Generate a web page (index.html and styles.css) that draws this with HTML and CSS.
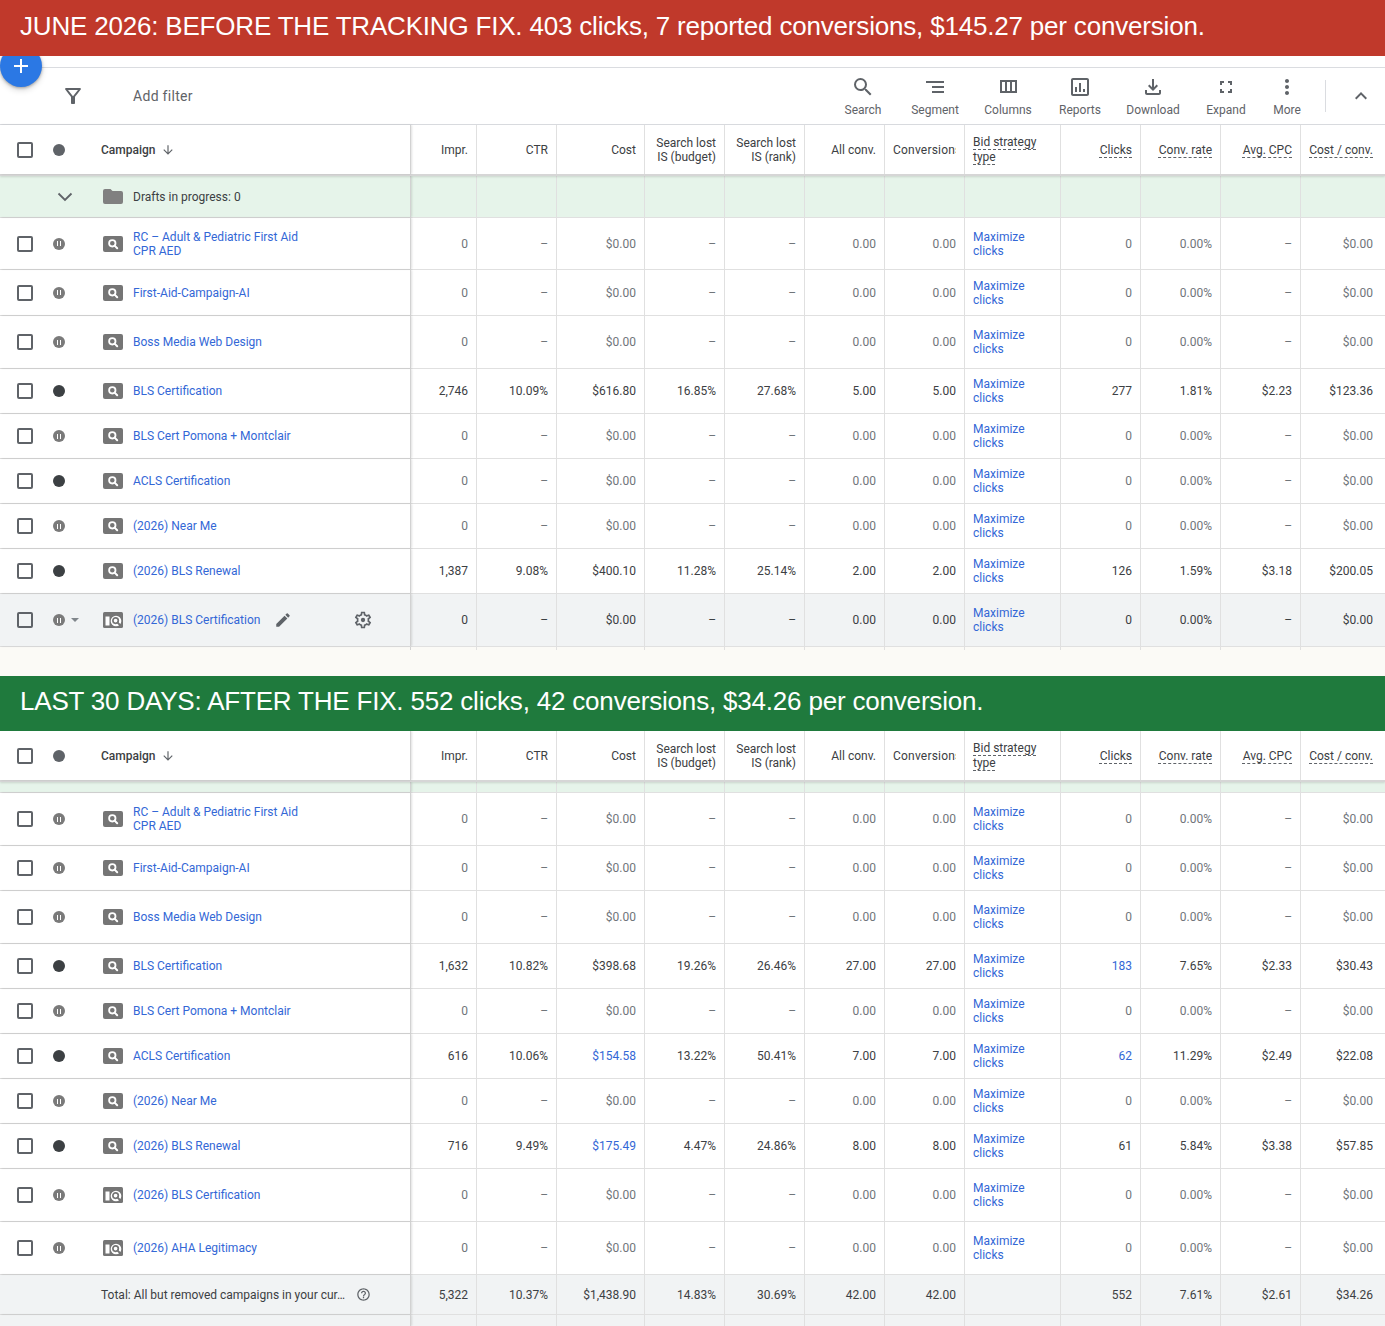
FILE: index.html
```html
<!DOCTYPE html>
<html lang="en">
<head>
<meta charset="utf-8">
<title>Campaigns – before and after the tracking fix</title>
<link rel="stylesheet" href="styles.css">
</head>
<body>
<svg class="sprite" width="0" height="0" aria-hidden="true">
  <symbol id="t1" viewBox="0 0 20 16">
    <rect width="20" height="16" rx="2" fill="#757575"/>
    <circle cx="9.3" cy="7.3" r="3.2" fill="none" stroke="#fff" stroke-width="1.8"/>
    <line x1="11.6" y1="9.6" x2="14.2" y2="12.2" stroke="#fff" stroke-width="2" stroke-linecap="round"/>
  </symbol>
  <symbol id="t2" viewBox="0 0 20 16">
    <rect width="20" height="16" rx="1.5" fill="#757575"/>
    <rect x="2.5" y="4.5" width="4" height="9" fill="#fff"/>
    <circle cx="13" cy="9" r="5.3" fill="#fff"/>
    <circle cx="12.6" cy="8.6" r="2.7" fill="none" stroke="#757575" stroke-width="1.7"/>
    <line x1="14.6" y1="10.6" x2="17" y2="13" stroke="#757575" stroke-width="1.9" stroke-linecap="round"/>
  </symbol>
</svg>

<div class="banner red">JUNE 2026: BEFORE THE TRACKING FIX. 403 clicks, 7 reported conversions, $145.27 per conversion.</div>

<div class="toolwrap">
  <div class="fab"><svg viewBox="0 0 24 24" width="24" height="24"><path d="M19 13h-6v6h-2v-6H5v-2h6V5h2v6h6v2z" fill="#fff"/></svg></div>
  <div class="toolbar">
    <svg class="filter" viewBox="0 0 24 24"><path d="M7 6h10l-5.01 6.3L7 6zm-2.75-.39C6.27 8.2 10 13 10 13v6c0 .55.45 1 1 1h2c.55 0 1-.45 1-1v-6s3.72-4.8 5.74-7.39A.998.998 0 0 0 18.95 4H5.04c-.83 0-1.3.95-.79 1.61z"/></svg>
    <div class="addf">Add filter</div>
    <div class="spacer"></div>
    <div class="tool w72"><svg viewBox="0 0 24 24"><path d="M15.5 14h-.79l-.28-.27A6.471 6.471 0 0 0 16 9.5 6.5 6.5 0 1 0 9.5 16c1.61 0 3.09-.59 4.23-1.570l.27.28v.79l5 4.99L20.49 19l-4.990-5zm-6 0C7.01 14 5 11.99 5 9.5S7.01 5 9.5 5 14 7.01 14 9.5 11.99 14 9.5 14z"/></svg><span>Search</span></div>
    <div class="tool w72"><svg viewBox="0 0 24 24"><path d="M9 18h12v-2H9v2zM3 6v2h18V6H3zm6 7h12v-2H9v2z"/></svg><span>Segment</span></div>
    <div class="tool w74"><svg viewBox="0 0 24 24"><path d="M4 5v13h17V5H4zm10 2v9h-3V7h3zM6 7h3v9H6V7zm13 9h-3V7h3v9z"/></svg><span>Columns</span></div>
    <div class="tool w70"><svg viewBox="0 0 24 24"><path d="M9 17H7v-5h2v5zm4 0h-2V8h2v9zm4 0h-2v-3h2v3zm2 2H5V5h14v14zm0-16H5c-1.1 0-2 .9-2 2v14c0 1.1.9 2 2 2h14c1.1 0 2-.9 2-2V5c0-1.1-.9-2-2-2z"/></svg><span>Reports</span></div>
    <div class="tool w76"><svg viewBox="0 0 24 24"><path d="M18 15v3H6v-3H4v3c0 1.1.9 2 2 2h12c1.1 0 2-.9 2-2v-3h-2zm-1-4l-1.41-1.41L13 12.17V4h-2v8.17L8.41 9.59 7 11l5 5 5-5z"/></svg><span>Download</span></div>
    <div class="tool w70"><svg viewBox="0 0 24 24"><path d="M8 14H6v4h4v-2H8v-2zm-2-4h2V8h2V6H6v4zm10 6h-2v2h4v-4h-2v2zM14 6v2h2v2h2V6h-4z"/></svg><span>Expand</span></div>
    <div class="tool w52"><svg viewBox="0 0 24 24"><path d="M12 8c1.1 0 2-.9 2-2s-.9-2-2-2-2 .9-2 2 .9 2 2 2zm0 2c-1.1 0-2 .9-2 2s.9 2 2 2 2-.9 2-2-.9-2-2-2zm0 6c-1.1 0-2 .9-2 2s.9 2 2 2 2-.9 2-2-.9-2-2-2z"/></svg><span>More</span></div>
    <div class="vdiv"></div>
    <div class="collapse"><svg viewBox="0 0 24 24"><path d="M12 8l-6 6 1.41 1.41L12 10.83l4.59 4.58L18 14z"/></svg></div>
  </div>
</div>

<div class="table">
  <div class="row head h51">
    <div class="c camp"><span class="cb"><i class="box"></i></span><span class="st"><i class="dot hd"></i></span><span class="ch">Campaign</span><svg class="sort" viewBox="0 0 24 24"><path d="M20 12l-1.41-1.41L13 16.17V4h-2v12.17l-5.58-5.590L4 12l8 8 8-8z"/></svg></div>
    <div class="c">Impr.</div>
    <div class="c">CTR</div>
    <div class="c">Cost</div>
    <div class="c">Search lost<br>IS (budget)</div>
    <div class="c">Search lost<br>IS (rank)</div>
    <div class="c">All conv.</div>
    <div class="c clip"><span>Conversions</span></div>
    <div class="c bidh dash"><span>Bid strategy</span><span>type</span></div>
    <div class="c dash"><span>Clicks</span></div>
    <div class="c dash"><span>Conv. rate</span></div>
    <div class="c dash"><span>Avg. CPC</span></div>
    <div class="c dash"><span>Cost / conv.</span></div>
  </div>

  <div class="row drafts h42">
    <div class="c camp"><span class="cb"></span><span class="st"><svg class="chev" viewBox="0 0 16 10"><polyline points="1.5,1.5 8,8 14.5,1.5" fill="none" stroke="#5f6368" stroke-width="1.8"/></svg></span><svg class="folder" viewBox="0 0 20 15"><path d="M0 2a2 2 0 0 1 2-2h5.5l2 2H18a2 2 0 0 1 2 2v9a2 2 0 0 1-2 2H2a2 2 0 0 1-2-2z" fill="#808080"/></svg><span class="dtext">Drafts in progress: 0</span></div>
    <div class="c"></div><div class="c"></div><div class="c"></div><div class="c"></div><div class="c"></div><div class="c"></div><div class="c"></div><div class="c"></div><div class="c"></div><div class="c"></div><div class="c"></div><div class="c"></div>
  </div>

  <div class="row z h52">
    <div class="c camp"><span class="cb"><i class="box"></i></span><span class="st"><i class="dot p"></i></span><svg class="ti"><use href="#t1"/></svg><span class="nm lnk">RC – Adult &amp; Pediatric First Aid CPR AED</span></div>
    <div class="c">0</div><div class="c">–</div><div class="c">$0.00</div><div class="c">–</div><div class="c">–</div><div class="c">0.00</div><div class="c">0.00</div><div class="c bid"><span class="lnk">Maximize clicks</span></div><div class="c">0</div><div class="c">0.00%</div><div class="c">–</div><div class="c">$0.00</div>
  </div>

  <div class="row z h46">
    <div class="c camp"><span class="cb"><i class="box"></i></span><span class="st"><i class="dot p"></i></span><svg class="ti"><use href="#t1"/></svg><span class="nm lnk">First-Aid-Campaign-AI</span></div>
    <div class="c">0</div><div class="c">–</div><div class="c">$0.00</div><div class="c">–</div><div class="c">–</div><div class="c">0.00</div><div class="c">0.00</div><div class="c bid"><span class="lnk">Maximize clicks</span></div><div class="c">0</div><div class="c">0.00%</div><div class="c">–</div><div class="c">$0.00</div>
  </div>

  <div class="row z h53">
    <div class="c camp"><span class="cb"><i class="box"></i></span><span class="st"><i class="dot p"></i></span><svg class="ti"><use href="#t1"/></svg><span class="nm lnk">Boss Media Web Design</span></div>
    <div class="c">0</div><div class="c">–</div><div class="c">$0.00</div><div class="c">–</div><div class="c">–</div><div class="c">0.00</div><div class="c">0.00</div><div class="c bid"><span class="lnk">Maximize clicks</span></div><div class="c">0</div><div class="c">0.00%</div><div class="c">–</div><div class="c">$0.00</div>
  </div>

  <div class="row h45">
    <div class="c camp"><span class="cb"><i class="box"></i></span><span class="st"><i class="dot"></i></span><svg class="ti"><use href="#t1"/></svg><span class="nm lnk">BLS Certification</span></div>
    <div class="c">2,746</div><div class="c">10.09%</div><div class="c">$616.80</div><div class="c">16.85%</div><div class="c">27.68%</div><div class="c">5.00</div><div class="c">5.00</div><div class="c bid"><span class="lnk">Maximize clicks</span></div><div class="c">277</div><div class="c">1.81%</div><div class="c">$2.23</div><div class="c">$123.36</div>
  </div>

  <div class="row z h45">
    <div class="c camp"><span class="cb"><i class="box"></i></span><span class="st"><i class="dot p"></i></span><svg class="ti"><use href="#t1"/></svg><span class="nm lnk">BLS Cert Pomona + Montclair</span></div>
    <div class="c">0</div><div class="c">–</div><div class="c">$0.00</div><div class="c">–</div><div class="c">–</div><div class="c">0.00</div><div class="c">0.00</div><div class="c bid"><span class="lnk">Maximize clicks</span></div><div class="c">0</div><div class="c">0.00%</div><div class="c">–</div><div class="c">$0.00</div>
  </div>

  <div class="row z h45">
    <div class="c camp"><span class="cb"><i class="box"></i></span><span class="st"><i class="dot"></i></span><svg class="ti"><use href="#t1"/></svg><span class="nm lnk">ACLS Certification</span></div>
    <div class="c">0</div><div class="c">–</div><div class="c">$0.00</div><div class="c">–</div><div class="c">–</div><div class="c">0.00</div><div class="c">0.00</div><div class="c bid"><span class="lnk">Maximize clicks</span></div><div class="c">0</div><div class="c">0.00%</div><div class="c">–</div><div class="c">$0.00</div>
  </div>

  <div class="row z h45">
    <div class="c camp"><span class="cb"><i class="box"></i></span><span class="st"><i class="dot p"></i></span><svg class="ti"><use href="#t1"/></svg><span class="nm lnk">(2026) Near Me</span></div>
    <div class="c">0</div><div class="c">–</div><div class="c">$0.00</div><div class="c">–</div><div class="c">–</div><div class="c">0.00</div><div class="c">0.00</div><div class="c bid"><span class="lnk">Maximize clicks</span></div><div class="c">0</div><div class="c">0.00%</div><div class="c">–</div><div class="c">$0.00</div>
  </div>

  <div class="row h45">
    <div class="c camp"><span class="cb"><i class="box"></i></span><span class="st"><i class="dot"></i></span><svg class="ti"><use href="#t1"/></svg><span class="nm lnk">(2026) BLS Renewal</span></div>
    <div class="c">1,387</div><div class="c">9.08%</div><div class="c">$400.10</div><div class="c">11.28%</div><div class="c">25.14%</div><div class="c">2.00</div><div class="c">2.00</div><div class="c bid"><span class="lnk">Maximize clicks</span></div><div class="c">126</div><div class="c">1.59%</div><div class="c">$3.18</div><div class="c">$200.05</div>
  </div>

  <div class="row hover h53">
    <div class="c camp"><span class="cb"><i class="box"></i></span><span class="st"><i class="dot p"></i><i class="caret"></i></span><svg class="ti"><use href="#t2"/></svg><span class="nm lnk">(2026) BLS Certification</span><svg class="pen" viewBox="0 0 24 24"><path d="M3 17.25V21h3.75L17.81 9.94l-3.75-3.75L3 17.25zM20.71 7.04a1 1 0 0 0 0-1.41l-2.34-2.34a1 1 0 0 0-1.41 0l-1.83 1.83 3.75 3.75 1.83-1.83z"/></svg><svg class="gear" viewBox="0 0 24 24"><path d="M19.43 12.98c.04-.32.07-.64.07-.98 0-.34-.03-.66-.07-.98l2.11-1.65c.19-.15.24-.42.12-.64l-2-3.46a.5.5 0 0 0-.61-.22l-2.49 1c-.52-.4-1.08-.73-1.69-.98l-.38-2.65A.488.488 0 0 0 14 2h-4c-.25 0-.46.18-.49.42l-.38 2.650c-.61.25-1.17.59-1.69.98l-2.49-1a.566.566 0 0 0-.18-.03c-.17 0-.34.09-.43.25l-2 3.46c-.13.22-.07.49.12.64l2.11 1.65c-.04.32-.07.65-.07.98s.03.66.07.98l-2.11 1.65c-.19.15-.24.42-.12.64l2 3.46a.5.5 0 0 0 .61.22l2.49-1c.52.4 1.08.73 1.69.98l.38 2.65c.03.24.24.42.49.42h4c.25 0 .46-.18.49-.42l.38-2.65c.61-.25 1.17-.59 1.69-.98l2.49 1c.06.02.12.03.18.03.17 0 .34-.09.43-.25l2-3.46c.12-.22.07-.49-.12-.64l-2.11-1.65zm-1.98-1.71c.04.31.05.52.05.73 0 .21-.02.43-.05.73l-.14 1.13.89.7 1.08.84-.7 1.21-1.27-.51-1.04-.42-.9.68c-.43.32-.84.56-1.25.73l-1.06.43-.16 1.13-.2 1.35h-1.4l-.19-1.35-.16-1.13-1.06-.43c-.43-.18-.83-.41-1.23-.71l-.91-.7-1.06.43-1.27.51-.7-1.21 1.08-.84.89-.7-.14-1.13c-.03-.31-.05-.54-.05-.74s.02-.43.05-.73l.14-1.13-.89-.7-1.08-.84.7-1.21 1.27.51 1.04.42.9-.68c.43-.32.84-.56 1.25-.73l1.06-.43.16-1.13.2-1.35h1.39l.19 1.35.16 1.13 1.06.43c.43.18.83.41 1.23.71l.91.7 1.06-.43 1.27-.51.7 1.21-1.07.85-.89.7.14 1.13z"/><circle cx="12" cy="12" r="2.6"/></svg></div>
    <div class="c">0</div><div class="c">–</div><div class="c">$0.00</div><div class="c">–</div><div class="c">–</div><div class="c">0.00</div><div class="c">0.00</div><div class="c bid"><span class="lnk">Maximize clicks</span></div><div class="c">0</div><div class="c">0.00%</div><div class="c">–</div><div class="c">$0.00</div>
  </div>
</div>

<div class="gap">
  <div class="row tail">
    <div class="c camp"></div><div class="c"></div><div class="c"></div><div class="c"></div><div class="c"></div><div class="c"></div><div class="c"></div><div class="c"></div><div class="c"></div><div class="c"></div><div class="c"></div><div class="c"></div><div class="c"></div>
  </div>
</div>

<div class="banner green">LAST 30 DAYS: AFTER THE FIX. 552 clicks, 42 conversions, $34.26 per conversion.</div>

<div class="table">
  <div class="row head h51">
    <div class="c camp"><span class="cb"><i class="box"></i></span><span class="st"><i class="dot hd"></i></span><span class="ch">Campaign</span><svg class="sort" viewBox="0 0 24 24"><path d="M20 12l-1.41-1.41L13 16.17V4h-2v12.17l-5.58-5.59L4 12l8 8 8-8z"/></svg></div>
    <div class="c">Impr.</div>
    <div class="c">CTR</div>
    <div class="c">Cost</div>
    <div class="c">Search lost<br>IS (budget)</div>
    <div class="c">Search lost<br>IS (rank)</div>
    <div class="c">All conv.</div>
    <div class="c clip"><span>Conversions</span></div>
    <div class="c bidh dash"><span>Bid strategy</span><span>type</span></div>
    <div class="c dash"><span>Clicks</span></div>
    <div class="c dash"><span>Conv. rate</span></div>
    <div class="c dash"><span>Avg. CPC</span></div>
    <div class="c dash"><span>Cost / conv.</span></div>
  </div>

  <div class="row drafts h11">
    <div class="c camp"></div><div class="c"></div><div class="c"></div><div class="c"></div><div class="c"></div><div class="c"></div><div class="c"></div><div class="c"></div><div class="c"></div><div class="c"></div><div class="c"></div><div class="c"></div><div class="c"></div>
  </div>

  <div class="row z h53">
    <div class="c camp"><span class="cb"><i class="box"></i></span><span class="st"><i class="dot p"></i></span><svg class="ti"><use href="#t1"/></svg><span class="nm lnk">RC – Adult &amp; Pediatric First Aid CPR AED</span></div>
    <div class="c">0</div><div class="c">–</div><div class="c">$0.00</div><div class="c">–</div><div class="c">–</div><div class="c">0.00</div><div class="c">0.00</div><div class="c bid"><span class="lnk">Maximize clicks</span></div><div class="c">0</div><div class="c">0.00%</div><div class="c">–</div><div class="c">$0.00</div>
  </div>

  <div class="row z h45">
    <div class="c camp"><span class="cb"><i class="box"></i></span><span class="st"><i class="dot p"></i></span><svg class="ti"><use href="#t1"/></svg><span class="nm lnk">First-Aid-Campaign-AI</span></div>
    <div class="c">0</div><div class="c">–</div><div class="c">$0.00</div><div class="c">–</div><div class="c">–</div><div class="c">0.00</div><div class="c">0.00</div><div class="c bid"><span class="lnk">Maximize clicks</span></div><div class="c">0</div><div class="c">0.00%</div><div class="c">–</div><div class="c">$0.00</div>
  </div>

  <div class="row z h53">
    <div class="c camp"><span class="cb"><i class="box"></i></span><span class="st"><i class="dot p"></i></span><svg class="ti"><use href="#t1"/></svg><span class="nm lnk">Boss Media Web Design</span></div>
    <div class="c">0</div><div class="c">–</div><div class="c">$0.00</div><div class="c">–</div><div class="c">–</div><div class="c">0.00</div><div class="c">0.00</div><div class="c bid"><span class="lnk">Maximize clicks</span></div><div class="c">0</div><div class="c">0.00%</div><div class="c">–</div><div class="c">$0.00</div>
  </div>

  <div class="row h45">
    <div class="c camp"><span class="cb"><i class="box"></i></span><span class="st"><i class="dot"></i></span><svg class="ti"><use href="#t1"/></svg><span class="nm lnk">BLS Certification</span></div>
    <div class="c">1,632</div><div class="c">10.82%</div><div class="c">$398.68</div><div class="c">19.26%</div><div class="c">26.46%</div><div class="c">27.00</div><div class="c">27.00</div><div class="c bid"><span class="lnk">Maximize clicks</span></div><div class="c lnk">183</div><div class="c">7.65%</div><div class="c">$2.33</div><div class="c">$30.43</div>
  </div>

  <div class="row z h45">
    <div class="c camp"><span class="cb"><i class="box"></i></span><span class="st"><i class="dot p"></i></span><svg class="ti"><use href="#t1"/></svg><span class="nm lnk">BLS Cert Pomona + Montclair</span></div>
    <div class="c">0</div><div class="c">–</div><div class="c">$0.00</div><div class="c">–</div><div class="c">–</div><div class="c">0.00</div><div class="c">0.00</div><div class="c bid"><span class="lnk">Maximize clicks</span></div><div class="c">0</div><div class="c">0.00%</div><div class="c">–</div><div class="c">$0.00</div>
  </div>

  <div class="row h45">
    <div class="c camp"><span class="cb"><i class="box"></i></span><span class="st"><i class="dot"></i></span><svg class="ti"><use href="#t1"/></svg><span class="nm lnk">ACLS Certification</span></div>
    <div class="c">616</div><div class="c">10.06%</div><div class="c lnk">$154.58</div><div class="c">13.22%</div><div class="c">50.41%</div><div class="c">7.00</div><div class="c">7.00</div><div class="c bid"><span class="lnk">Maximize clicks</span></div><div class="c lnk">62</div><div class="c">11.29%</div><div class="c">$2.49</div><div class="c">$22.08</div>
  </div>

  <div class="row z h45">
    <div class="c camp"><span class="cb"><i class="box"></i></span><span class="st"><i class="dot p"></i></span><svg class="ti"><use href="#t1"/></svg><span class="nm lnk">(2026) Near Me</span></div>
    <div class="c">0</div><div class="c">–</div><div class="c">$0.00</div><div class="c">–</div><div class="c">–</div><div class="c">0.00</div><div class="c">0.00</div><div class="c bid"><span class="lnk">Maximize clicks</span></div><div class="c">0</div><div class="c">0.00%</div><div class="c">–</div><div class="c">$0.00</div>
  </div>

  <div class="row h45">
    <div class="c camp"><span class="cb"><i class="box"></i></span><span class="st"><i class="dot"></i></span><svg class="ti"><use href="#t1"/></svg><span class="nm lnk">(2026) BLS Renewal</span></div>
    <div class="c">716</div><div class="c">9.49%</div><div class="c lnk">$175.49</div><div class="c">4.47%</div><div class="c">24.86%</div><div class="c">8.00</div><div class="c">8.00</div><div class="c bid"><span class="lnk">Maximize clicks</span></div><div class="c">61</div><div class="c">5.84%</div><div class="c">$3.38</div><div class="c">$57.85</div>
  </div>

  <div class="row z h53">
    <div class="c camp"><span class="cb"><i class="box"></i></span><span class="st"><i class="dot p"></i></span><svg class="ti"><use href="#t2"/></svg><span class="nm lnk">(2026) BLS Certification</span></div>
    <div class="c">0</div><div class="c">–</div><div class="c">$0.00</div><div class="c">–</div><div class="c">–</div><div class="c">0.00</div><div class="c">0.00</div><div class="c bid"><span class="lnk">Maximize clicks</span></div><div class="c">0</div><div class="c">0.00%</div><div class="c">–</div><div class="c">$0.00</div>
  </div>

  <div class="row z h53">
    <div class="c camp"><span class="cb"><i class="box"></i></span><span class="st"><i class="dot p"></i></span><svg class="ti"><use href="#t2"/></svg><span class="nm lnk">(2026) AHA Legitimacy</span></div>
    <div class="c">0</div><div class="c">–</div><div class="c">$0.00</div><div class="c">–</div><div class="c">–</div><div class="c">0.00</div><div class="c">0.00</div><div class="c bid"><span class="lnk">Maximize clicks</span></div><div class="c">0</div><div class="c">0.00%</div><div class="c">–</div><div class="c">$0.00</div>
  </div>

  <div class="row total h40">
    <div class="c camp"><span class="cb"></span><span class="st"></span><span class="ttl">Total: All but removed campaigns in your cur…</span><svg class="help" viewBox="0 0 24 24"><path d="M11 18h2v-2h-2v2zm1-16C6.48 2 2 6.48 2 12s4.48 10 10 10 10-4.48 10-10S17.52 2 12 2zm0 18c-4.41 0-8-3.59-8-8s3.590-8 8-8 8 3.59 8 8-3.59 8-8 8zm0-14c-2.21 0-4 1.79-4 4h2c0-1.1.9-2 2-2s2 .9 2 2c0 2-3 1.75-3 5h2c0-2.25 3-2.5 3-5 0-2.21-1.79-4-4-4z"/></svg></div>
    <div class="c">5,322</div><div class="c">10.37%</div><div class="c">$1,438.90</div><div class="c">14.83%</div><div class="c">30.69%</div><div class="c">42.00</div><div class="c">42.00</div><div class="c"></div><div class="c">552</div><div class="c">7.61%</div><div class="c">$2.61</div><div class="c">$34.26</div>
  </div>

  <div class="row total more">
    <div class="c camp"></div><div class="c"></div><div class="c"></div><div class="c"></div><div class="c"></div><div class="c"></div><div class="c"></div><div class="c"></div><div class="c"></div><div class="c"></div><div class="c"></div><div class="c"></div><div class="c"></div>
  </div>
</div>
</body>
</html>
```

FILE: styles.css
```css
* { box-sizing: border-box; }
html, body { margin: 0; padding: 0; }
body {
  width: 1385px;
  overflow: hidden;
  background: #fff;
  color: #3c4043;
  font-family: Roboto, "Liberation Sans", Arial, sans-serif;
}
.sprite { position: absolute; width: 0; height: 0; overflow: hidden; }

/* banners */
.banner {
  position: relative;
  z-index: 2;
  display: flex;
  align-items: center;
  height: 56px;
  padding: 0 0 4px 20px;
  color: #fff;
  font-family: "Liberation Sans", Arial, sans-serif;
  font-size: 26px;
  letter-spacing: -0.19px;
  white-space: nowrap;
}
.banner.red { background: #c0392b; }
.banner.green { background: #1f7a3d; height: 55px; }

/* toolbar */
.toolwrap { position: relative; padding-top: 11px; }
.fab {
  position: absolute;
  left: 0;
  top: -11px;
  z-index: 1;
  width: 42px;
  height: 42px;
  border-radius: 50%;
  background: #2b78e4;
  box-shadow: 0 1px 3px rgba(0,0,0,.3), 0 3px 6px rgba(0,0,0,.15);
  display: flex;
  align-items: center;
  justify-content: center;
}
.toolbar {
  height: 58px;
  border-top: 1px solid #dadce0;
  border-bottom: 1px solid #dadce0;
  display: flex;
  align-items: center;
}
.filter { width: 24px; height: 24px; margin-left: 61px; fill: #5f6368; }
.addf { margin-left: 48px; font-size: 14px; letter-spacing: 0.3px; color: #5f6368; }
.spacer { flex: 1; }
.tool {
  align-self: flex-start;
  display: flex;
  flex-direction: column;
  align-items: center;
  padding-top: 7px;
  font-size: 12px;
  line-height: 14px;
  color: #5f6368;
}
.tool svg { width: 24px; height: 24px; fill: #5f6368; margin-bottom: 4px; }
.w72 { width: 72px; }
.w74 { width: 74px; }
.w70 { width: 70px; }
.w76 { width: 76px; }
.w52 { width: 52px; }
.vdiv { width: 1px; height: 32px; background: #dadce0; margin-left: 12px; }
.collapse { width: 48px; margin-left: 11px; display: flex; justify-content: center; }
.collapse svg { width: 24px; height: 24px; fill: #5f6368; }

/* table */
.row {
  display: grid;
  grid-template-columns: 411px 66px 80px 88px 80px 80px 80px 80px 96px 80px 80px 80px 84px;
  border-bottom: 1px solid #e0e0e0;
  font-size: 12px;
  line-height: 14px;
}
.c {
  display: flex;
  align-items: center;
  justify-content: flex-end;
  text-align: right;
  padding: 0 8px;
  border-right: 1px solid #e0e0e0;
  overflow: hidden;
  white-space: nowrap;
  color: #3c4043;
}
.c:last-child { border-right: none; padding-right: 12px; }
.c.camp {
  justify-content: flex-start;
  text-align: left;
  padding: 0;
  border-right: 1px solid #d2d2d2;
  box-shadow: 1px 0 2px rgba(0,0,0,.12);
  white-space: normal;
}
.h11 { height: 11px; }
.h40 { height: 40px; }
.h42 { height: 42px; }
.h45 { height: 45px; }
.h46 { height: 46px; }
.h51 { height: 51px; }
.h52 { height: 52px; }
.h53 { height: 53px; }

.head {
  position: relative;
  z-index: 1;
  background: #fff;
  border-bottom: 2px solid #d6d6d6;
  box-shadow: 0 1px 2px rgba(0,0,0,.12);
}
.drafts { background: #e6f4ea; }
.hover, .total { background: #f1f3f4; }
.more { height: 11px; border-bottom: none; }

.z .c { color: #70757a; }
.lnk, .z .c.lnk { color: #3367d6; }

.clip { justify-content: flex-start; text-align: left; }
.clip span { display: block; min-width: 0; overflow: hidden; letter-spacing: 0.2px; }
.bid { justify-content: flex-start; text-align: left; white-space: normal; }
.bidh { flex-direction: column; align-items: flex-start; justify-content: center; text-align: left; }
.dash span {
  text-decoration: underline dashed #5f6368 1px;
  text-underline-offset: 3px;
}
.bidh span { line-height: 15px; }

/* campaign cell parts */
.cb { width: 50px; flex: none; display: flex; justify-content: center; }
.box {
  display: block;
  width: 16px;
  height: 16px;
  border: 2px solid #5f6368;
  border-radius: 2px;
}
.st { width: 50px; flex: none; display: flex; align-items: center; }
.dot {
  display: block;
  position: relative;
  width: 12px;
  height: 12px;
  margin-left: 3px;
  border-radius: 50%;
  background: #3c4043;
}
.dot.hd { background: #5f6368; }
.dot.p { background: #7a7a7a; }
.dot.p::before, .dot.p::after {
  content: "";
  position: absolute;
  top: 3.5px;
  width: 1.5px;
  height: 5px;
  background: #fff;
}
.dot.p::before { left: 3.7px; }
.dot.p::after { left: 6.8px; }
.caret {
  display: block;
  width: 0;
  height: 0;
  margin-left: 6px;
  border-left: 4px solid transparent;
  border-right: 4px solid transparent;
  border-top: 4px solid #80868b;
}
.ti { width: 20px; height: 16px; margin-left: 3px; flex: none; }
.nm { margin-left: 10px; max-width: 172px; }
.ch { margin-left: 1px; font-weight: 500; color: #3c4043; }
.sort { width: 14px; height: 14px; margin-left: 5px; fill: #5f6368; }
.chev { width: 16px; height: 10px; margin-left: 7px; }
.folder { width: 20px; height: 15px; margin-left: 3px; flex: none; }
.dtext { margin-left: 10px; color: #3c4043; }
.pen { width: 18px; height: 18px; margin-left: 14px; fill: #5f6368; flex: none; }
.gear { width: 20px; height: 20px; margin-left: auto; margin-right: 37px; fill: #5f6368; flex: none; }
.ttl { margin-left: 1px; color: #3c4043; white-space: nowrap; }
.help { width: 15px; height: 15px; margin-left: 11px; fill: #5f6368; flex: none; }

.gap { height: 29px; background: #fbfaf6; }
.tail { height: 3px; border-bottom: none; }
.tail .c.camp { box-shadow: none; }
```
